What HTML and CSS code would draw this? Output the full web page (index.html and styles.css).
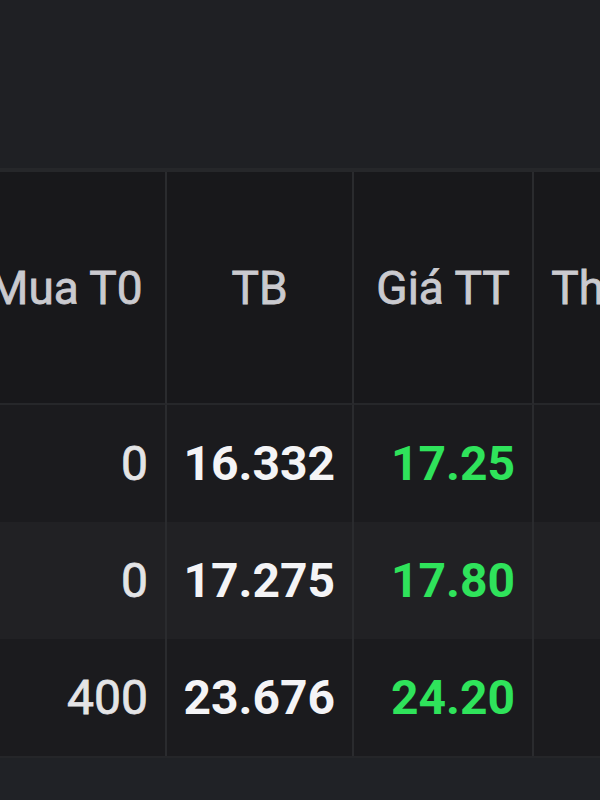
FILE: index.html
```html
<!DOCTYPE html>
<html lang="vi">
<head>
<meta charset="utf-8">
<title>Bảng giá</title>
<link rel="stylesheet" href="styles.css">
</head>
<body>
<div class="top"></div>
<div class="board">
  <div class="row head">
    <div class="cell">Mua T0</div>
    <div class="cell">TB</div>
    <div class="cell">Giá TT</div>
    <div class="cell">Thay đổi</div>
  </div>
  <div class="row odd">
    <div class="cell qty">0</div>
    <div class="cell avg">16.332</div>
    <div class="cell up">17.25</div>
    <div class="cell"></div>
  </div>
  <div class="row even">
    <div class="cell qty">0</div>
    <div class="cell avg">17.275</div>
    <div class="cell up">17.80</div>
    <div class="cell"></div>
  </div>
  <div class="row odd">
    <div class="cell qty">400</div>
    <div class="cell avg">23.676</div>
    <div class="cell up">24.20</div>
    <div class="cell"></div>
  </div>
</div>
<div class="bottom"></div>
</body>
</html>
```

FILE: styles.css
```css
html, body {
  margin: 0;
  padding: 0;
  width: 600px;
  height: 800px;
  overflow: hidden;
  background: #1f2024;
  font-family: Roboto, "Noto Sans", sans-serif;
}

.top {
  height: 168px;
  background: #1f2024;
  border-bottom: 4px solid #26272a;
}

.board {
  display: grid;
  grid-template-columns: 201px 187px 180px 212px;
  grid-template-rows: 233px 117px 117px 117px;
  margin-left: -34px;
  width: 780px;
}

.row {
  display: contents;
}

.cell {
  box-sizing: border-box;
  display: flex;
  align-items: center;
  justify-content: flex-end;
  padding: 0 17px;
  border-right: 2px solid #2a2b2e;
  white-space: nowrap;
  overflow: hidden;
  font-size: 48px;
}

.head .cell {
  justify-content: center;
  padding: 0;
  background: #18181b;
  border-bottom: 2px solid #26272a;
  font-size: 46px;
  font-weight: 400;
  color: #cacacf;
  -webkit-text-stroke: 0.8px #cacacf;
}

.odd .cell { background: #1b1b1e; }
.even .cell { background: #212124; }

.qty {
  color: #e4e4e6;
  font-weight: 400;
  -webkit-text-stroke: 0.8px #e4e4e6;
}

.avg {
  color: #f4f4f6;
  font-weight: 700;
}

.up {
  color: #2fe35b;
  font-weight: 700;
}

.bottom {
  height: 60px;
  background: #202226;
  border-top: 2px solid #252629;
}
```
